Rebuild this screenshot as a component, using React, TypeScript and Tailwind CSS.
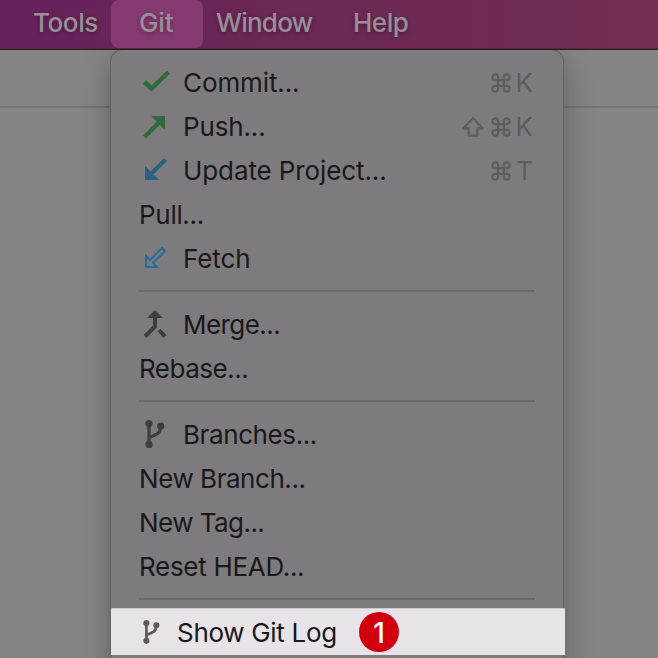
import type { ReactNode } from "react";

function Row({ icon, label, keys, spacing }: { icon?: ReactNode; label: string; keys?: ReactNode; spacing: string }) {
  return (
    <div className="flex h-11 items-center pl-[28px] pr-[30px] text-[26px] leading-[44px] text-[#19181a]">
      {icon && <span className="flex w-11 shrink-0 items-center">{icon}</span>}
      <span className={`whitespace-nowrap ${spacing}`}>{label}</span>
      {keys && <span className="ml-auto flex items-center text-[#5e5c5f]">{keys}</span>}
    </div>
  );
}

function Separator() {
  return (
    <div className="flex h-[22px] items-start px-[28px] pt-[9px]">
      <div className="h-[2px] w-full bg-[#6c6a6d]" />
    </div>
  );
}

function Command() {
  return (
    <svg width="20" height="20" viewBox="0 0 20 20" fill="none" stroke="currentColor" strokeWidth="2.3">
      <path d="M7.200 7.200H4.300a2.900 2.900 0 1 1 2.900-2.900v11.400a2.900 2.900 0 1 1-2.900-2.900h11.400a2.900 2.900 0 1 1-2.900 2.900V4.300a2.900 2.900 0 1 1 2.900 2.900H6.500" />
    </svg>
  );
}

function Shift() {
  return (
    <svg width="22" height="20" viewBox="0 0 22 20" fill="none" stroke="currentColor" strokeWidth="2.3" strokeLinejoin="round">
      <path d="M11 1.300 1.300 11.500h5.400v7.200h8.600v-7.200h5.400Z" />
    </svg>
  );
}

function Key({ letter }: { letter: string }) {
  return <span className="w-[22px] text-right">{letter}</span>;
}

function Branch({ className, color }: { className: string; color: string }) {
  return (
    <svg className={className} viewBox="0 0 20 28" fill="none" stroke={color} strokeWidth="3.2">
      <path d="M4 4v20M15.700 6c0 7.500-4 8.500-11.700 11.500" />
      <circle cx="4" cy="3.600" r="3.600" fill={color} stroke="none" />
      <circle cx="4" cy="24.400" r="3.600" fill={color} stroke="none" />
      <circle cx="15.700" cy="6" r="3.600" fill={color} stroke="none" />
    </svg>
  );
}

const box = "h-[32px] w-[32px]";

export default function App() {
  return (
    <div className="relative flex h-[658px] w-[658px] flex-col overflow-hidden bg-[#858585] font-['Inter','Liberation_Sans',sans-serif]">
      <div className="relative z-20 flex h-[50px] shrink-0 items-start bg-linear-to-r from-[#66215b] via-[#6c2855] to-[#712e50] text-[26px] font-medium leading-[46px] text-[#998f98] shadow-[inset_0_-1px_0_#2c171f,inset_0_-2px_0_#552940] [text-shadow:0_2px_5px_rgba(0,0,0,0.3)]">
        <span className="w-[111px] pl-[33px] tracking-[-0.4px]">Tools</span>
        <span className="h-[48px] w-[92px] rounded-[8px] bg-[#863a72] pl-[28px] tracking-[-0.1px]">Git</span>
        <span className="w-[150px] pl-[13px] tracking-[-0.8px]">Window</span>
        <span className="tracking-[-0.5px]">Help</span>
      </div>
      <div className="h-[58px] shrink-0 border-b-2 border-[#737373]" />

      <div className="absolute left-[111px] top-[50px] z-10 h-[640px] w-[452px] rounded-t-[12px] bg-[#7e7b7e] pt-[11px] shadow-[0_0_0_1px_#646264,0_8px_30px_rgba(0,0,0,0.3)]">
        <Row label="Commit..." spacing="tracking-[-0.1px]" keys={<><Command /><Key letter="K" /></>} icon={
          <svg className={box} viewBox="0 0 32 32"><path d="M5.500 15 12.500 21.500 29.500 5" fill="none" stroke="#32693b" strokeWidth="4.5" /></svg>
        } />
        <Row label="Push..." spacing="tracking-[-0.15px]" keys={<><Shift /><span className="w-[7px]" /><Command /><Key letter="K" /></>} icon={
          <svg className={box} viewBox="0 0 32 32"><path d="M5.500 26 20 11.500" stroke="#32693b" strokeWidth="4" /><path d="M12 5h14v14Z" fill="#32693b" /></svg>
        } />
        <Row label="Update Project..." spacing="tracking-[-0.1px]" keys={<><Command /><Key letter="T" /></>} icon={
          <svg className={box} viewBox="0 0 32 32"><path d="M26.500 4.500 12 19" stroke="#286184" strokeWidth="4" /><path d="M6 11v14h14Z" fill="#286184" /></svg>
        } />
        <Row label="Pull..." spacing="tracking-[-0.3px]" />
        <Row label="Fetch" spacing="tracking-[-0.1px]" icon={
          <svg className={box} viewBox="0 0 32 32"><path d="M7 13v11h11l-4-4L26 8l-3-3-12 12Z" fill="none" stroke="#286c94" strokeWidth="2" /></svg>
        } />
        <Separator />
        <Row label="Merge..." spacing="tracking-[-0.55px]" icon={
          <svg className={box} viewBox="0 0 32 32"><path d="M16 8v9.500L6 27.500M20 21l6 6.500" fill="none" stroke="#3e3d3f" strokeWidth="4" /><path d="m16 1 8 8H8Z" fill="#3e3d3f" /></svg>
        } />
        <Row label="Rebase..." spacing="tracking-[-0.5px]" />
        <Separator />
        <Row label="Branches..." spacing="tracking-[-0.4px]" icon={<Branch color="#3e3d3f" className="mb-[2px] ml-[6px] h-[28px] w-[20px]" />} />
        <Row label="New Branch..." spacing="tracking-[-0.45px]" />
        <Row label="New Tag..." spacing="tracking-[-0.55px]" />
        <Row label="Reset HEAD..." spacing="tracking-[-0.3px]" />
        <Separator />
        <div className="-mt-[3px] flex h-[47px] w-[454px] items-center border-t border-[#cbc7cc] bg-[#e7e3e8] pl-[32px]">
          <Branch color="#5c5b5d" className="h-[24px] w-[17px]" />
          <span className="ml-[17px] w-[182px] whitespace-nowrap pt-[2px] text-[26px] leading-[44px] tracking-[-0.3px] text-[#19181a]">Show Git Log</span>
          <span className="flex h-10 w-10 items-center justify-center rounded-full bg-[#d0000f] pt-[2px] text-[28px] font-medium leading-none text-white">1</span>
        </div>
      </div>
    </div>
  );
}
